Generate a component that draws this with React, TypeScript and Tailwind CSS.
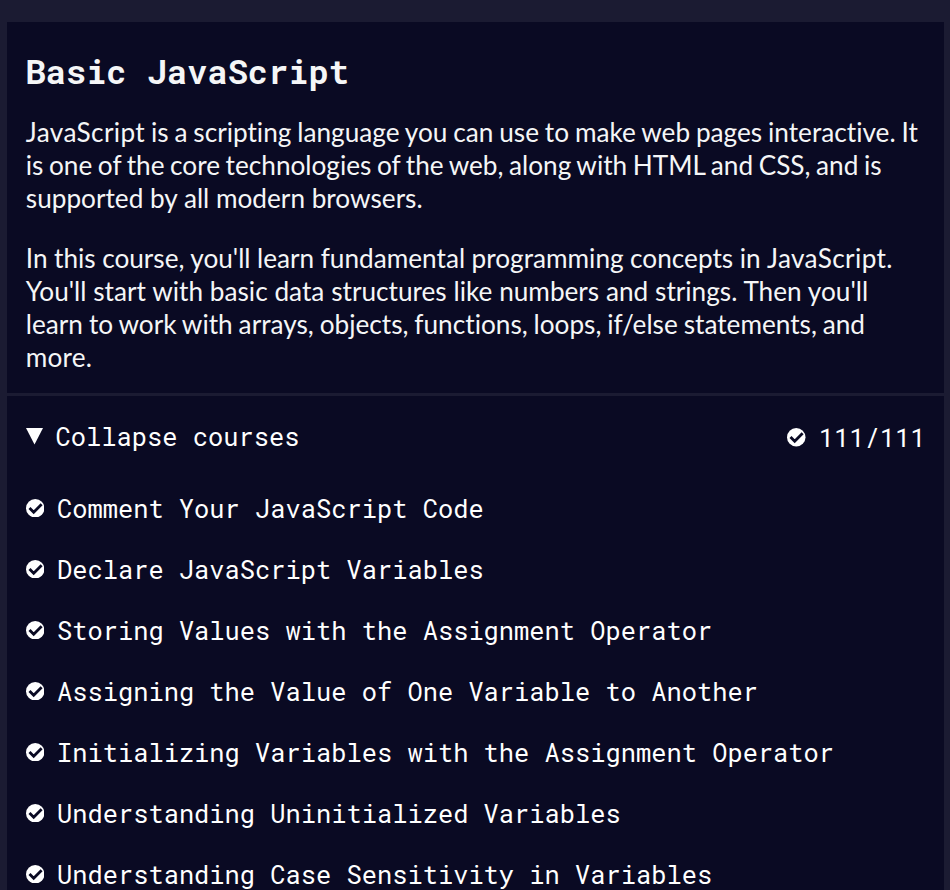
import type { ReactNode } from "react";

const mono = "font-['Roboto_Mono','DejaVu_Sans_Mono',monospace]";

type Line = { content: ReactNode; spacing: string };

const brand = <span className="tracking-[0.36px]">JavaScript</span>;

const intro: Line[] = [
  { content: <>{brand} is a scripting language you can use to make web pages interactive. It</>, spacing: "[word-spacing:-0.83px]" },
  { content: "is one of the core technologies of the web, along with HTML and CSS, and is", spacing: "[word-spacing:-1.13px]" },
  { content: "supported by all modern browsers.", spacing: "" },
];

const outline: Line[] = [
  { content: <>In this course, you'll learn fundamental programming concepts in {brand}.</>, spacing: "[word-spacing:-0.22px]" },
  { content: "You'll start with basic data structures like numbers and strings. Then you'll", spacing: "[word-spacing:0.1px]" },
  { content: "learn to work with arrays, objects, functions, loops, if/else statements, and", spacing: "[word-spacing:-0.8px]" },
  { content: "more.", spacing: "tracking-[0.2px]" },
];

const lessons = [
  "Comment Your JavaScript Code",
  "Declare JavaScript Variables",
  "Storing Values with the Assignment Operator",
  "Assigning the Value of One Variable to Another",
  "Initializing Variables with the Assignment Operator",
  "Understanding Uninitialized Variables",
  "Understanding Case Sensitivity in Variables",
];

function PassedIcon({ className = "" }: { className?: string }) {
  return (
    <svg viewBox="0 0 18 18" className={`size-[18.5px] shrink-0 ${className}`} aria-hidden="true">
      <circle cx="9" cy="9" r="9" fill="white" />
      <path d="M3.4 8.7 7.5 12.9 15.2 5.1" fill="none" stroke="#0a0a23" strokeWidth="2.7" />
    </svg>
  );
}

function Paragraph({ lines }: { lines: Line[] }) {
  return (
    <p>
      {lines.map(({ content, spacing }, i) => (
        <span key={i} className={`block ${spacing}`}>{content}</span>
      ))}
    </p>
  );
}

export default function App() {
  return (
    <div className="h-[890px] w-[950px] overflow-hidden bg-[#1b1b32] pt-[22px] pr-[6px] pl-[7px] text-white">
      <main className="h-full bg-[#0a0a23]">
        <section className="h-[374px] border-b-[3px] border-[#1b1b32] px-[19px] pt-[29px]">
          <h1 className={`-ml-[0.5px] h-[65px] text-[33.7px] leading-[40px] font-bold whitespace-nowrap text-[#f5f6f7] ${mono}`}>Basic JavaScript</h1>
          <div className="-ml-[0.2px] flex flex-col gap-[27px] font-[Lato,sans-serif] text-[26.2px] leading-[33px] whitespace-nowrap text-[#f5f6f7] [font-variant-ligatures:none]">
            <Paragraph lines={intro} />
            <Paragraph lines={outline} />
          </div>
        </section>
        <div className={`flex h-[82px] items-center justify-between pr-[18.5px] pl-[19px] text-[25.4px] ${mono}`}>
          <span className="flex items-center pb-[2px]">
            <svg viewBox="0 0 17 17" className="mt-px mr-[12.6px] size-[17px]" aria-hidden="true">
              <path d="M0 0H17L8.5 16.5Z" fill="white" />
            </svg>
            Collapse courses
          </span>
          <span className="flex items-center"><PassedIcon className="mt-px mr-[13px]" />111/111</span>
        </div>
        <ul className={`text-[25.4px] ${mono}`}>
          {lessons.map((title) => (
            <li key={title} className="flex h-[61px] items-center gap-[12.7px] pl-[18.8px] whitespace-nowrap"><PassedIcon className="mb-px" />{title}</li>
          ))}
        </ul>
      </main>
    </div>
  );
}
